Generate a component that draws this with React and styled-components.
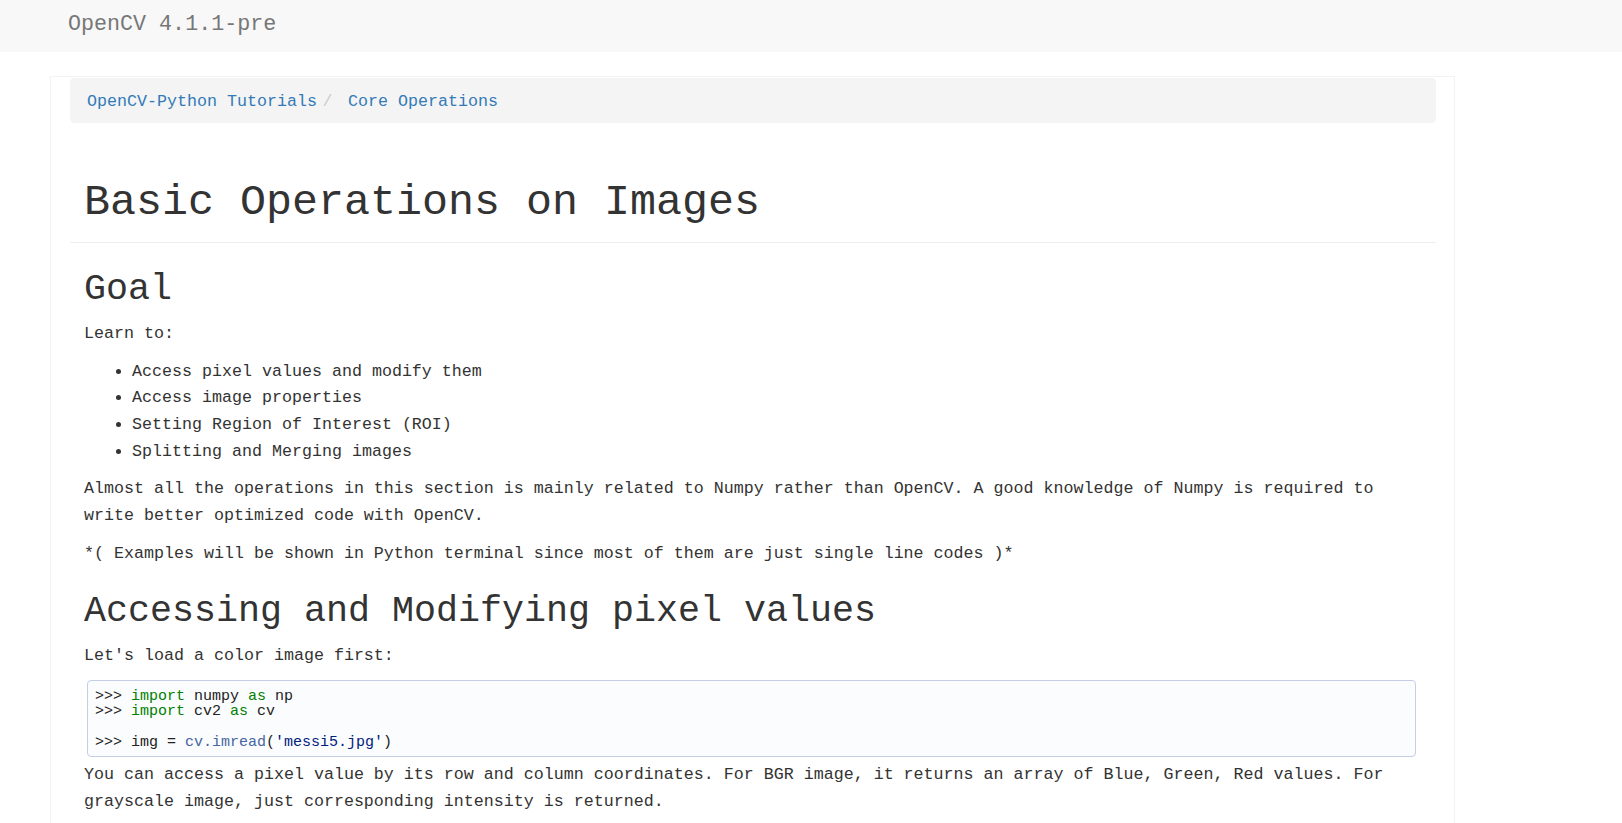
import React from "react";
import styled, { createGlobalStyle } from "styled-components";

const GlobalStyle = createGlobalStyle`
  html, body {
    margin: 0;
    padding: 0;
    background: #ffffff;
  }
  body {
    font-family: "Liberation Mono", "DejaVu Sans Mono", monospace;
    color: #333333;
    font-size: 16.667px;
    line-height: 26.667px;
  }
  * { box-sizing: border-box; }
`;

const NavBar = styled.header`
  height: 52px;
  background: #f8f8f8;
  padding: 12px 0 0 68px;
`;

const Brand = styled.div`
  font-size: 21.7px;
  line-height: 25px;
  color: #777777;
`;

const Card = styled.main`
  margin: 24px 0 0 50px;
  width: 1405px;
  border: 1px solid #f3f3f3;
  border-bottom: none;
  padding: 1px 18px 60px 19px;
  min-height: 760px;
`;

const Crumbs = styled.ol`
  display: flex;
  list-style: none;
  margin: 0;
  padding: 11px 18px 7px 17px;
  background: #f4f4f4;
  border-radius: 4.4px;
  line-height: 26.667px;
`;

const Crumb = styled.li`
  &:not(:first-child)::before {
    content: "/\\00a0";
    padding: 0 5.56px;
    color: #cccccc;
  }
`;

const CrumbLink = styled.a`
  color: #337ab7;
  text-decoration: none;
`;

const PageHeader = styled.div`
  padding: 56.5px 14px 14.7px;
  border-bottom: 1px solid #eeeeee;
  margin-bottom: 26px;
`;

const Title = styled.h1`
  margin: 0;
  font-size: 43.33px;
  line-height: 47.7px;
  font-weight: 400;
  color: #333333;
`;

const Contents = styled.div`
  padding: 0 14px;
`;

const H2 = styled.h2`
  font-size: 36.67px;
  line-height: 40.33px;
  font-weight: 400;
  color: #333333;
  margin: ${(p) => (p.$first ? "0" : "23.5px")} 0 12px;
`;

const Para = styled.p`
  margin: 0 0 11.1px;
`;

const List = styled.ul`
  margin: 0 0 11.1px;
  padding-left: 48px;
  list-style: disc;
`;

const Fragment = styled.div`
  margin: -1.5px 6px 5px 3px;
  padding: 8px 6px 6.5px 7px;
  border: 1px solid #c4cfe5;
  border-radius: 4px;
  background: #fbfcfd;
  font-family: "Liberation Mono", "DejaVu Sans Mono", monospace;
  font-size: 15px;
  line-height: 15.3px;
  color: #222222;
`;

const CodeLine = styled.div`
  white-space: pre;
  min-height: 15.3px;
`;

const Token = styled.span`
  color: ${(p) =>
    p.$kind === "kw" ? "#008000" : p.$kind === "fn" ? "#4665a2" : p.$kind === "str" ? "#002080" : "inherit"};
`;

export default function App() {
  return (
    <>
      <GlobalStyle />
      <NavBar>
        <Brand>OpenCV 4.1.1-pre</Brand>
      </NavBar>
      <Card>
        <Crumbs>
          <Crumb>
            <CrumbLink href="#">OpenCV-Python Tutorials</CrumbLink>
          </Crumb>
          <Crumb>
            <CrumbLink href="#">Core Operations</CrumbLink>
          </Crumb>
        </Crumbs>
        <PageHeader>
          <Title>Basic Operations on Images</Title>
        </PageHeader>
        <Contents>
          <H2 $first>Goal</H2>
          <Para>Learn to:</Para>
          <List>
            <li>Access pixel values and modify them</li>
            <li>Access image properties</li>
            <li>Setting Region of Interest (ROI)</li>
            <li>Splitting and Merging images</li>
          </List>
          <Para>
            Almost all the operations in this section is mainly related to Numpy rather than OpenCV. A good
            knowledge of Numpy is required to write better optimized code with OpenCV.
          </Para>
          <Para>*( Examples will be shown in Python terminal since most of them are just single line codes )*</Para>
          <H2>Accessing and Modifying pixel values</H2>
          <Para>Let's load a color image first:</Para>
          <Fragment>
            <CodeLine>
              {">>> "}
              <Token $kind="kw">import</Token> numpy <Token $kind="kw">as</Token> np
            </CodeLine>
            <CodeLine>
              {">>> "}
              <Token $kind="kw">import</Token> cv2 <Token $kind="kw">as</Token> cv
            </CodeLine>
            <CodeLine> </CodeLine>
            <CodeLine>
              {">>> img = "}
              <Token $kind="fn">cv.imread</Token>(<Token $kind="str">'messi5.jpg'</Token>)
            </CodeLine>
          </Fragment>
          <Para>
            You can access a pixel value by its row and column coordinates. For BGR image, it returns an array of
            Blue, Green, Red values. For grayscale image, just corresponding intensity is returned.
          </Para>
        </Contents>
      </Card>
    </>
  );
}
